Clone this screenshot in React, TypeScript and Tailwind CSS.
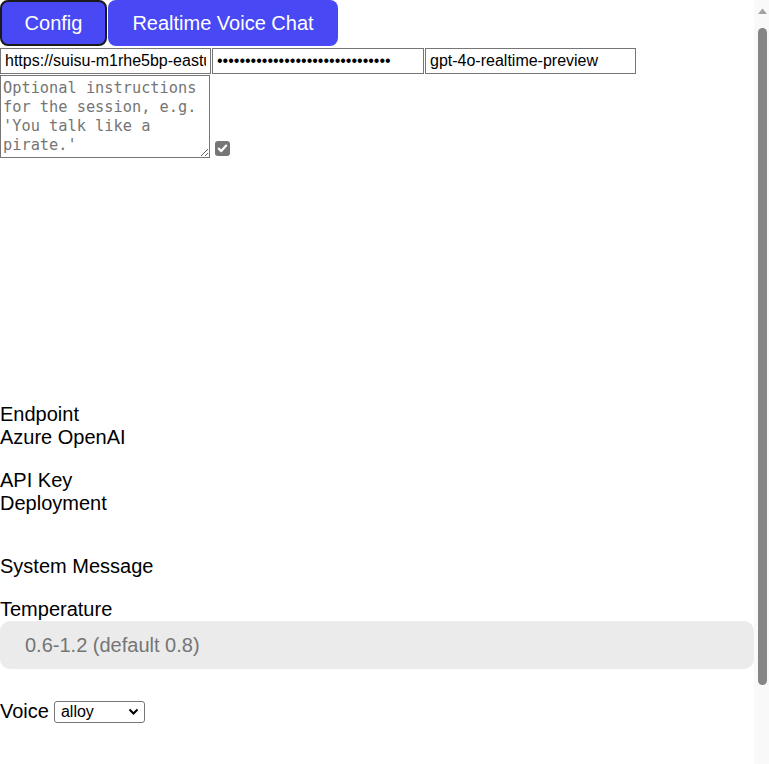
import React from "react";

export default function App() {
  return (
    <div
      className="flex h-[764px] overflow-hidden bg-white text-black text-[20px] leading-[23px]"
      style={{ fontFamily: '"Liberation Sans", Arial, sans-serif' }}
    >
      <div className="min-w-0 flex-1">
        <div className="flex gap-px">
          <button className="h-[46px] w-[107px] rounded-[8px] border-2 border-[#1a1a1a] bg-[#4848f5] text-[20px] text-white">Config</button>
          <button className="h-[46px] w-[230px] rounded-[8px] bg-[#4848f5] text-[20px] text-white">Realtime Voice Chat</button>
        </div>
        <div className="mt-[2px] flex gap-px">
          <input
            readOnly
            value="https://suisu-m1rhe5bp-eastus2.openai.azure.com"
            className="h-[26px] w-[211px] border border-[#767676] px-[4px] text-[16px] text-black outline-none"
          />
          <input
            readOnly
            type="password"
            value="abcdefghijklmnopqrstuvwxyz12345"
            className="h-[26px] w-[212px] border border-[#767676] px-[4px] text-[16px] text-black outline-none"
          />
          <input
            readOnly
            value="gpt-4o-realtime-preview"
            className="h-[26px] w-[211px] border border-[#767676] px-[4px] text-[16px] text-black outline-none"
          />
        </div>
        <div className="mt-px flex items-end gap-[5px]">
          <textarea
            readOnly
            placeholder="Optional instructions for the session, e.g. 'You talk like a pirate.'"
            className="h-[83px] w-[210px] resize border border-[#767676] px-[2px] pt-[3px] pb-[2px] text-[15.3px] leading-[19px] placeholder:text-[#757575] outline-none"
            style={{ fontFamily: '"DejaVu Sans Mono", monospace' }}
          />
          <div className="mb-[2px] flex h-[15px] w-[15px] items-center justify-center rounded-[3px] bg-[#767676]">
            <svg width="11" height="11" viewBox="0 0 11 11">
              <path d="M1.8 5.6 L4.3 8.1 L9.2 2.6" fill="none" stroke="white" strokeWidth="2.2" strokeLinecap="round" strokeLinejoin="round" />
            </svg>
          </div>
        </div>
        <div className="h-[245px]" />
        <div>Endpoint</div>
        <div>Azure OpenAI</div>
        <div className="mt-[20px]">API Key</div>
        <div>Deployment</div>
        <div className="mt-[40px]">System Message</div>
        <div className="mt-[20px]">Temperature</div>
        <div className="flex h-[48px] w-full items-center rounded-[10px] bg-[#ebebeb] pl-[25px] text-[#757575]">0.6-1.2 (default 0.8)</div>
        <div className="mt-[31px] flex items-center gap-[5px]">
          <span>Voice</span>
          <div className="relative flex h-[22px] w-[91px] items-center rounded-[3px] border border-[#767676] pl-[6px] text-[16px]">
            alloy
            <svg className="absolute right-[5px] top-[6px]" width="11" height="8" viewBox="0 0 11 8">
              <path d="M1.5 1.5 L5.5 5.5 L9.5 1.5" fill="none" stroke="black" strokeWidth="2" />
            </svg>
          </div>
        </div>
      </div>
      <div className="flex w-[15px] shrink-0 flex-col items-center bg-[#f9f9f9] pl-[2px]">
        <svg className="mt-[8px]" width="9" height="6" viewBox="0 0 9 6">
          <path d="M0 6 L4.5 0.5 L9 6 Z" fill="#a3a3a3" />
        </svg>
        <div className="mt-[14px] h-[657px] w-[9px] rounded-full bg-[#858585]" />
      </div>
    </div>
  );
}
